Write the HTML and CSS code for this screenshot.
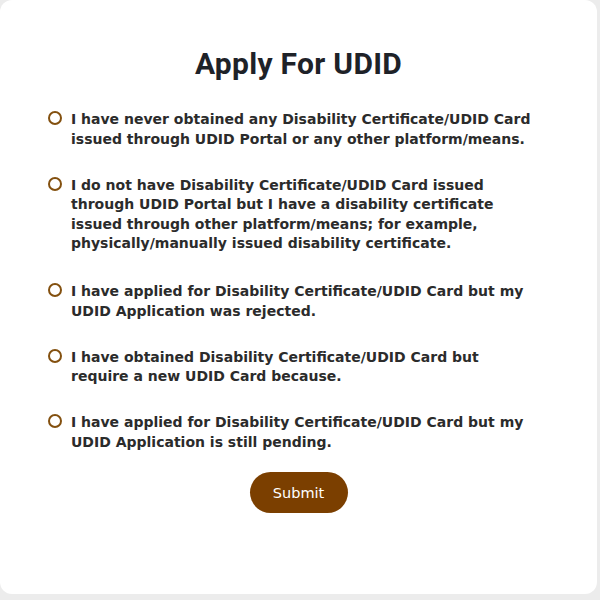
FILE: index.html
```html
<!DOCTYPE html>
<html lang="en">
<head>
    <meta charset="UTF-8">
    <meta name="viewport" content="width=device-width, initial-scale=1.0">
    <title>Apply For UDID</title>
    <link rel="stylesheet" href="styles.css">
</head>
<body>

    <form class="apply-card">
        <h2 class="apply-title">Apply For UDID</h2>

        <div class="options">
            <label class="option">
                <input type="radio" name="status" value="new">
                <span>I have never obtained any Disability Certificate/UDID Card issued through UDID Portal or any other platform/means.</span>
            </label>
            <label class="option">
                <input type="radio" name="status" value="other">
                <span>I do not have Disability Certificate/UDID Card issued through UDID Portal but I have a disability certificate issued through other platform/means; for example, physically/manually issued disability certificate.</span>
            </label>
            <label class="option">
                <input type="radio" name="status" value="rejected">
                <span>I have applied for Disability Certificate/UDID Card but my UDID Application was rejected.</span>
            </label>
            <label class="option">
                <input type="radio" name="status" value="renew">
                <span>I have obtained Disability Certificate/UDID Card but require a new UDID Card because.</span>
            </label>
            <label class="option">
                <input type="radio" name="status" value="pending">
                <span>I have applied for Disability Certificate/UDID Card but my UDID Application is still pending.</span>
            </label>
        </div>

        <div class="actions">
            <button type="button" class="submit-btn">Submit</button>
        </div>
    </form>

</body>
</html>
```

FILE: styles.css
```css
body {
    margin: 0;
    padding: 0;
    background-color: #ececec;
    font-family: 'DejaVu Sans', 'Open Sans', sans-serif;
    color: #2b2b2b;
}

.apply-card {
    width: 597px;
    height: 594px;
    box-sizing: border-box;
    margin: 0;
    background-color: #ffffff;
    border-radius: 12px;
    padding-top: 47px;
}

.apply-title {
    margin: 0 0 29px;
    text-align: center;
    font-family: Roboto, sans-serif;
    font-size: 30px;
    font-weight: 700;
    letter-spacing: 0.3px;
    line-height: 34px;
    color: #1e2228;
}

.options {
    display: flex;
    flex-direction: column;
    gap: 26.5px;
    padding: 0 62px 0 48px;
    margin-bottom: 20px;
}

.option {
    display: flex;
    align-items: flex-start;
    gap: 9px;
    font-size: 14px;
    font-weight: 700;
    line-height: 19.5px;
    cursor: pointer;
}

/* a touch more room under the long second option */
.option:nth-child(2) {
    margin-bottom: 2px;
}

/* custom brown radio ring */
.option input {
    appearance: none;
    -webkit-appearance: none;
    flex-shrink: 0;
    width: 14px;
    height: 14px;
    margin: 0;
    margin-top: 1px;
    border: 2px solid #83500f;
    border-radius: 50%;
    box-sizing: border-box;
}

.option input:checked {
    background: radial-gradient(#83500f 40%, transparent 45%);
}

.actions {
    display: flex;
    justify-content: center;
}

.submit-btn {
    width: 98px;
    height: 41px;
    border: none;
    border-radius: 21px;
    background-color: #7b3f00;
    color: #ffffff;
    font-family: 'DejaVu Sans', sans-serif;
    font-size: 14.5px;
    cursor: pointer;
}
```
